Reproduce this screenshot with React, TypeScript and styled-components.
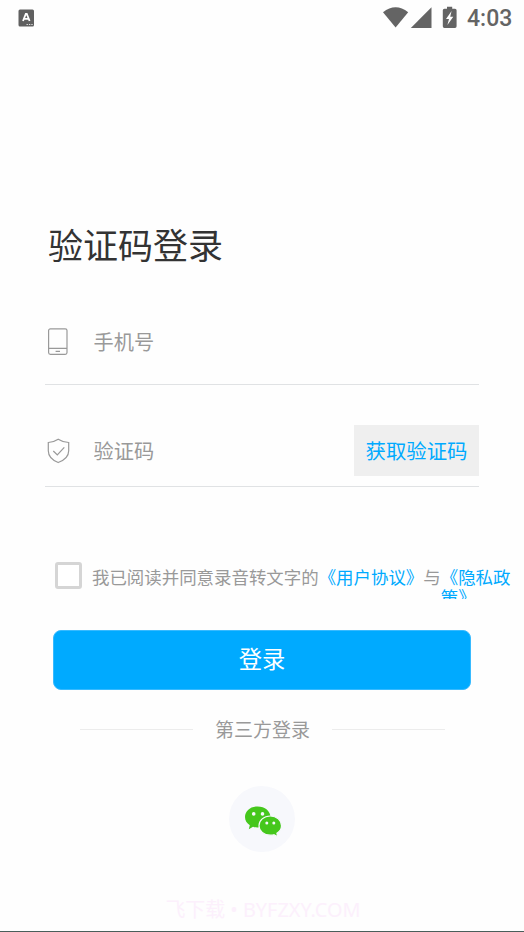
import React from "react";
import styled, { createGlobalStyle } from "styled-components";

const GlobalStyle = createGlobalStyle`
  * { box-sizing: border-box; }
  body { margin: 0; background: #fefefe; }
`;

const Screen = styled.main`
  display: flex;
  flex-direction: column;
  height: 932px;
  overflow: hidden;
  background: #fefefe;
  border-bottom: 1px solid #4a5e5a;
  font-family: "Noto Sans CJK SC", sans-serif;
`;

const StatusBar = styled.header`
  display: flex;
  align-items: center;
  justify-content: space-between;
  height: 36px;
  padding: 0 12px 0 18px;
  color: #646464;
`;

const StatusIcons = styled.div`
  display: flex;
  align-items: center;
`;

const Clock = styled.time`
  width: 45px;
  margin-left: 9px;
  padding-top: 2px;
  font: 500 23px/36px Roboto, sans-serif;
  white-space: nowrap;
`;

const Title = styled.h1`
  margin: 183px 0 0 48px;
  font-size: 35px;
  font-weight: 400;
  line-height: 50px;
  color: #333;
`;

const Field = styled.label<{ $top: number; $height: number }>`
  display: flex;
  align-items: center;
  flex-shrink: 0;
  height: ${(p) => p.$height}px;
  margin: ${(p) => p.$top}px 45px 0;
  border-bottom: 1px solid #e0e2e4;
`;

const FieldIcon = styled.svg`
  flex: none;
  width: 26px;
  height: 30px;
  fill: none;
  stroke: #999;
  stroke-width: 1.2;
`;

const Input = styled.input`
  flex: 1;
  min-width: 0;
  height: 30px;
  margin-left: 22.5px;
  padding: 0;
  border: 0;
  outline: 0;
  background: transparent;
  font: 400 20.2px/30px "Noto Sans CJK SC", sans-serif;
  color: #333;
  &::placeholder { color: #999; opacity: 1; }
`;

const CodeInput = styled(Input)`
  height: 31px;
  padding-top: 1px;
`;

const CodeButton = styled.button`
  width: 125px;
  height: 51px;
  padding: 0;
  border: 0;
  background: #efefef;
  color: #00aaff;
  font: 400 20.4px/50px "Noto Sans CJK SC", sans-serif;
`;

const Agreement = styled.div`
  display: flex;
  flex-shrink: 0;
  height: 37px;
  margin: 75px 0 0 55px;
  overflow: hidden;
  font-size: 17.45px;
  line-height: 19.5px;
  color: #999;
`;

const Checkbox = styled.input`
  appearance: none;
  flex: none;
  width: 27px;
  height: 27px;
  margin: 0 10px 0 0;
  border: 3px solid #d5d5d5;
  border-radius: 3px;
  background: #fff;
`;

const AgreementText = styled.span`
  flex: none;
  padding-top: 5px;
`;

const Link = styled(AgreementText)<{ $width?: number }>`
  width: ${(p) => (p.$width ? `${p.$width}px` : "auto")};
  color: #00aaff;
  word-break: break-all;
  line-break: anywhere;
`;

const LoginButton = styled.button`
  flex-shrink: 0;
  height: 60px;
  margin: 31px 53px 0;
  padding: 0 0 4px;
  border: 1px solid #38baff;
  border-radius: 8px;
  background: #00aaff;
  color: #fff;
  font: 400 23.3px/34px "Noto Sans CJK SC", sans-serif;
`;

const Divider = styled.div`
  display: flex;
  align-items: center;
  gap: 22px;
  height: 30px;
  margin: 24px 79px 0 80px;
  font-size: 19px;
  line-height: 28px;
  color: #999;
  white-space: nowrap;
  &::before, &::after {
    content: "";
    flex: 1;
    height: 1px;
    margin-top: 1px;
    background: #ececec;
  }
`;

const WechatButton = styled.button`
  display: grid;
  place-items: center;
  flex: none;
  width: 66px;
  height: 66px;
  margin: 42px auto 0;
  padding: 0;
  border: 0;
  border-radius: 50%;
  background: #f7f8fc;
`;

const Watermark = styled.footer`
  margin-top: 43px;
  padding-left: 2px;
  text-align: center;
  font: 400 19.9px/30px "Noto Sans", "Noto Sans CJK SC", sans-serif;
  color: #fcf0fc;
`;

export default function App() {
  return (
    <>
      <GlobalStyle />
      <Screen>
        <StatusBar>
          <svg width="17" height="18" viewBox="0 0 17 18">
            <rect x="0.5" y="0.5" width="15.5" height="17" rx="1.5" fill="#606060" />
            <path d="M5 12 7.8 5h1L11.6 12M6 9.8h4.6" fill="none" stroke="#fff" strokeWidth="1.8" />
            <path d="M8.5 15.5h1.4m1 0h1.4m1 0h1.4" stroke="#ddd" strokeWidth="1.2" />
          </svg>
          <StatusIcons>
            <svg width="75" height="24" viewBox="0 0 75 24" fill="#646464">
              <path d="M0 6.2Q12.6-3.8 25.2 6.2L12.6 21.4Z" />
              <path d="M48.5 1.2V22H27.8Z" />
              <path
                fillRule="evenodd"
                d="M64 .7h5.2v2H72q1.6 0 1.6 1.6v16q0 1.6-1.6 1.6H61.4q-1.6 0-1.6-1.6v-16q0-1.6 1.6-1.6H64ZM68.6 5l-5.6 8h3l-1.6 6 5.9-8.2h-3.1Z"
              />
            </svg>
            <Clock>4:03</Clock>
          </StatusIcons>
        </StatusBar>

        <Title>验证码登录</Title>

        <Field $top={30} $height={86}>
          <FieldIcon viewBox="0 0 26 30">
            <rect x="3.6" y="1.8" width="18.4" height="25.6" rx="1.8" />
            <path d="M3.6 21.4H22M10.6 24.4h4.4" />
          </FieldIcon>
          <Input placeholder="手机号" type="tel" />
        </Field>

        <Field $top={29} $height={73}>
          <FieldIcon viewBox="0 0 26 30">
            <path d="M13.2 4.2Q8.5 7.3 3.3 7.5V15.7q0 7.8 9.9 11.8Q23.7 23.5 23.7 15.7V7.5Q18 7.3 13.2 4.2Z" />
            <path d="m8.3 16 4 4 7-7.6" />
          </FieldIcon>
          <CodeInput placeholder="验证码" />
          <CodeButton>获取验证码</CodeButton>
        </Field>

        <Agreement>
          <Checkbox type="checkbox" aria-label="同意协议" />
          <AgreementText>我已阅读并同意录音转文字的</AgreementText>
          <Link>《用户协议》</Link>
          <AgreementText>与</AgreementText>
          <Link $width={71}>《隐私政策》</Link>
        </Agreement>

        <LoginButton>登录</LoginButton>
        <Divider>第三方登录</Divider>

        <WechatButton aria-label="微信">
          <svg width="40" height="38" viewBox="0 -4.5 40 38">
            <path
              fill="#45c71c"
              d="M15.5 2C8.2 2 3 6.7 3 12.6c0 3.5 1.8 6.2 4.8 8.2l-1 4 4.2-2.5q2.2.7 4.5.7C23 23 28.5 18.5 28.5 12.6S23 2 15.5 2Z"
            />
            <path
              fill="#45c71c"
              stroke="#f7f8fc"
              strokeWidth="1.2"
              d="M28.3 11.5C21.8 11.5 17 15.9 17 21.2s4.8 9.5 11.3 9.5q2 0 3.6-.5l3.8 2-.8-3.4c2.9-1.9 4.6-4.5 4.6-7.6C39.5 15.9 34.7 11.5 28.3 11.5Z"
            />
            <g fill="#f7f8fc">
              <circle cx="11.7" cy="9.4" r="1.8" />
              <circle cx="20.5" cy="9.4" r="1.8" />
              <circle cx="24.8" cy="18.4" r="1.5" />
              <circle cx="31.8" cy="18.4" r="1.5" />
            </g>
          </svg>
        </WechatButton>

        <Watermark>飞下载 • BYFZXY.COM</Watermark>
      </Screen>
    </>
  );
}
